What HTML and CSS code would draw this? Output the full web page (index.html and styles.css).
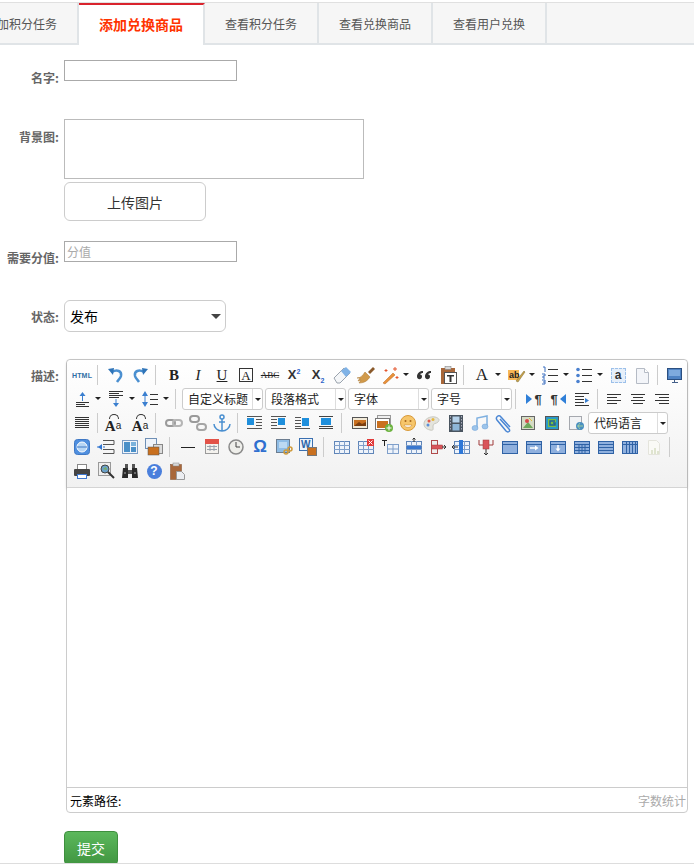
FILE: index.html
```html
<!DOCTYPE html>
<html lang="en">
<head>
    <meta charset="UTF-8">
    <meta name="viewport" content="width=device-width, initial-scale=1.0">
    <title>添加兑换商品</title>
    <link rel="stylesheet" href="styles.css">
</head>
<body>
    <svg class="defs" width="0" height="0">
        <symbol id="grid" viewBox="0 0 20 20">
            <rect x="2.500" y="4.500" width="15" height="12" fill="#eef3fa" stroke="#5f85b8"/>
            <path d="M2 8.500h16M2 12.500h16M7.500 4v13M12.500 4v13" stroke="#7f9fca" fill="none"/>
        </symbol>
        <symbol id="merge" viewBox="0 0 20 20">
            <rect x="2.500" y="4.500" width="15" height="12" fill="#8fb0de" stroke="#2f62a5"/>
            <path d="M2.500 7.500h15" stroke="#2f62a5"/>
        </symbol>
    </svg>

    <nav class="tabs">
        <a class="tab">添加积分任务</a>
        <a class="tab active">添加兑换商品</a>
        <a class="tab">查看积分任务</a>
        <a class="tab">查看兑换商品</a>
        <a class="tab">查看用户兑换</a>
    </nav>

    <form class="page">
        <div class="row row-name">
            <label class="lbl">名字:</label>
            <input class="txt" type="text">
        </div>
        <div class="row row-bg">
            <label class="lbl">背景图:</label>
            <div>
                <div class="preview"></div>
                <button type="button" class="upload">上传图片</button>
            </div>
        </div>
        <div class="row row-score">
            <label class="lbl">需要分值:</label>
            <input class="txt" type="text" placeholder="分值">
        </div>
        <div class="row row-state">
            <label class="lbl lbl-state">状态:</label>
            <div class="state">发布<i class="state-arrow"></i></div>
        </div>
        <div class="row row-desc">
            <label class="lbl lbl-desc">描述:</label>
            <div class="editor">
                <div class="toolbar">
                    <div class="tb-row">
                        <span class="tb"><span class="html-ic">HTML</span></span>
                        <span class="sep"></span>
                        <span class="tb"><svg width="20" height="20" viewBox="0 0 20 20"><path d="M6 7c5-3 10-1 9 4-.5 2-2 3-4 6" fill="none" stroke="#4a8fd0" stroke-width="2.500"/><path d="M2 4l6-1-1 7z" fill="#2f74b8"/></svg></span>
                        <span class="tb"><svg width="20" height="20" viewBox="0 0 20 20"><path d="M14 7C9 4 4 6 5 11c.5 2 2 3 4 6" fill="none" stroke="#4a8fd0" stroke-width="2.500"/><path d="M18 4l-6-1 1 7z" fill="#2f74b8"/></svg></span>
                        <span class="sep"></span>
                        <span class="tb glyph bold">B</span>
                        <span class="tb glyph ital">I</span>
                        <span class="tb glyph under">U</span>
                        <span class="tb"><span class="boxed">A</span></span>
                        <span class="tb"><span class="strike">ABC</span></span>
                        <span class="tb"><span class="xx">X<sup>2</sup></span></span>
                        <span class="tb"><span class="xx">X<sub>2</sub></span></span>
                        <span class="tb"><svg width="20" height="20" viewBox="0 0 20 20"><path d="M2 13L12 3l6 5L8 18H5z" fill="#f4f6f8" stroke="#9aa3ad"/><path d="M9 6l5-4 5 5-5 5z" fill="#7fb2e6"/></svg></span>
                        <span class="tb"><svg width="20" height="20" viewBox="0 0 20 20"><path d="M12 7l5-5 2 2-5 5z" fill="#8a5a2b"/><path d="M1 13c4 0 6-3 8-6l5 5c-2 3-5 6-11 6l2-3-3 1 2-3z" fill="#d19a4a" stroke="#a8742f" stroke-width=".5"/></svg></span>
                        <span class="tb"><svg width="20" height="20" viewBox="0 0 20 20"><path d="M3 18L13 8l2 2L5 19z" fill="#e8913a" stroke="#b8661e" stroke-width=".5"/><path d="M15 2v4M13 4h4M6 4v3M4.500 5.500h3M17 11v3M15.500 12.500h3" stroke="#e4572e" fill="none"/></svg></span><span class="caret"></span>
                        <span class="tb"><svg width="20" height="20" viewBox="0 0 20 20"><path d="M9 6C6 6 3 8 3 11.500S8 15 8 11.500C8 10 7 9.500 6 9.500 6.500 8.500 8 8 9 8zM17 6c-3 0-6 2-6 5.500S16 15 16 11.500c0-1.500-1-2-2-2 .5-1 2-1.500 3-1.500z" fill="#333"/></svg></span>
                        <span class="tb"><svg width="20" height="20" viewBox="0 0 20 20"><rect x="3" y="3" width="14" height="16" fill="#a8673a"/><rect x="7" y="1.500" width="6" height="3" fill="#d8d8d8" stroke="#777" stroke-width=".5"/><rect x="6.500" y="7.500" width="12" height="11" fill="#fff" stroke="#555"/><path d="M9 10h7v1.500h-2.500V17h-2v-5.500H9z" fill="#333"/></svg></span>
                        <span class="sep"></span>
                        <span class="tb glyph font-a">A</span><span class="caret"></span>
                        <span class="tb"><svg width="20" height="20" viewBox="0 0 20 20"><rect x="2" y="5" width="11" height="10" fill="#f6b756"/><text x="3" y="13" class="svg-ab">ab</text><path d="M10 16l8-10 1 1-7 10z" fill="#c9a24a" stroke="#7b6a2e" stroke-width=".5"/></svg></span><span class="caret"></span>
                        <span class="tb"><svg width="20" height="20" viewBox="0 0 20 20"><path d="M8 4.500h10M8 10.500h10M8 16.500h10" stroke="#333" fill="none"/><path d="M3 2h2v5M2 9h3v2H3v2h2M2 15h3v4H2M3 17h2" stroke="#3a6fc0" fill="none"/></svg></span><span class="caret"></span>
                        <span class="tb"><svg width="20" height="20" viewBox="0 0 20 20"><path d="M8 4.500h10M8 10.500h10M8 16.500h10" stroke="#333" fill="none"/><circle cx="4" cy="4.500" r="1.800" fill="#4a80d0"/><circle cx="4" cy="10.500" r="1.800" fill="#4a80d0"/><circle cx="4" cy="16.500" r="1.800" fill="#4a80d0"/></svg></span><span class="caret"></span>
                        <span class="tb"><span class="dashed-a">a</span></span>
                        <span class="tb"><svg width="20" height="20" viewBox="0 0 20 20"><path d="M4.500 3.500h8l4 4v11h-12z" fill="#f3f5f9" stroke="#b5bbc5"/><path d="M12.500 3.500v4h4" fill="#fff" stroke="#b5bbc5"/></svg></span>
                        <span class="sep sep-n"></span>
                        <span class="tb"><svg width="20" height="20" viewBox="0 0 20 20"><rect x="3.500" y="3.500" width="14" height="11" fill="#4f83c4" stroke="#2b4f80"/><rect x="5" y="5" width="11" height="6" fill="#7eaade"/><path d="M8 17.500h6M10.500 15v2" stroke="#44608a" fill="none"/></svg></span>
                    </div>
                    <div class="tb-row">
                        <span class="tb"><svg width="20" height="20" viewBox="0 0 20 20"><path d="M4 13.500h13M4 15.500h9M4 17.500h13" stroke="#333" fill="none"/><path d="M10.500 12V6" stroke="#3a7fd0"/><path d="M7.500 7l3-4 3 4z" fill="#3a7fd0"/></svg></span><span class="caret"></span>
                        <span class="tb"><svg width="20" height="20" viewBox="0 0 20 20"><path d="M3 2.500h14M3 4.500h10M3 6.500h14M3 8.500h10" stroke="#333" fill="none"/><path d="M10 10v5" stroke="#3a7fd0"/><path d="M7 14l3 4 3-4z" fill="#3a7fd0"/></svg></span><span class="caret"></span>
                        <span class="tb"><svg width="20" height="20" viewBox="0 0 20 20"><path d="M10 5.500h8M10 10.500h8M10 15.500h8" stroke="#333" fill="none"/><path d="M5 6v8" stroke="#3a7fd0"/><path d="M2 7l3-5 3 5zM2 13l3 5 3-5z" fill="#3a7fd0"/></svg></span><span class="caret"></span>
                        <span class="sep"></span>
                        <span class="combo">自定义标题</span>
                        <span class="combo">段落格式</span>
                        <span class="combo">字体</span>
                        <span class="combo combo-last">字号</span>
                        <span class="sep"></span>
                        <span class="tb"><span class="para"><i class="tri-r"></i>¶</span></span>
                        <span class="tb"><span class="para">¶<i class="tri-l"></i></span></span>
                        <span class="tb"><svg width="20" height="20" viewBox="0 0 20 20"><path d="M3 4.500h14M3 7.500h9M3 10.500h9M3 13.500h9M3 16.500h14" stroke="#333" fill="none"/><path d="M13 9l4 2.500-4 2.500z" fill="#3a7fd0"/></svg></span>
                        <span class="sep sep-n"></span>
                        <span class="tb"><svg width="20" height="20" viewBox="0 0 20 20"><path d="M3 5.500h14M3 8.500h10M3 11.500h14M3 14.500h10" stroke="#333"/></svg></span>
                        <span class="tb"><svg width="20" height="20" viewBox="0 0 20 20"><path d="M3 5.500h14M5 8.500h10M3 11.500h14M5 14.500h10" stroke="#333"/></svg></span>
                        <span class="tb"><svg width="20" height="20" viewBox="0 0 20 20"><path d="M3 5.500h14M7 8.500h10M3 11.500h14M7 14.500h10" stroke="#333"/></svg></span>
                    </div>
                    <div class="tb-row">
                        <span class="tb"><svg width="20" height="20" viewBox="0 0 20 20"><path d="M3 4.500h14M3 6.500h14M3 8.500h14M3 10.500h14M3 12.500h14M3 14.500h14" stroke="#333"/></svg></span>
                        <span class="sep"></span>
                        <span class="tb tb-left"><span class="case">A<small>a</small></span><i class="case-arc"></i></span>
                        <span class="tb"><span class="case">A<small>a</small></span><i class="case-arc"></i></span>
                        <span class="sep"></span>
                        <span class="tb"><svg width="20" height="20" viewBox="0 0 20 20"><rect x="2" y="7" width="9" height="6" rx="3" fill="none" stroke="#9a9a9a" stroke-width="2"/><rect x="9" y="7" width="9" height="6" rx="3" fill="none" stroke="#b5b5b5" stroke-width="2"/></svg></span>
                        <span class="tb"><svg width="20" height="20" viewBox="0 0 20 20"><rect x="2" y="3" width="9" height="6" rx="3" fill="none" stroke="#9a9a9a" stroke-width="2"/><rect x="9" y="11" width="9" height="6" rx="3" fill="none" stroke="#a5a5a5" stroke-width="2"/></svg></span>
                        <span class="tb"><svg width="20" height="20" viewBox="0 0 20 20"><circle cx="10" cy="4" r="2" fill="none" stroke="#4a8fd0" stroke-width="1.500"/><path d="M10 6v12M7 9h6M2 11c0 4 4 7 8 7s8-3 8-7" fill="none" stroke="#4a8fd0" stroke-width="1.500"/></svg></span>
                        <span class="sep sep-n"></span>
                        <span class="tb"><svg width="20" height="20" viewBox="0 0 20 20"><rect x="3" y="5" width="7" height="7" fill="#1f8fdc"/><path d="M3 3.500h15M12 6.500h6M12 9.500h6M12 12.500h6M3 15.500h15" stroke="#555"/></svg></span>
                        <span class="tb"><svg width="20" height="20" viewBox="0 0 20 20"><rect x="10" y="5" width="7" height="7" fill="#1f8fdc"/><path d="M3 3.500h15M3 6.500h6M3 9.500h6M3 12.500h6M3 15.500h15" stroke="#555"/></svg></span>
                        <span class="tb"><svg width="20" height="20" viewBox="0 0 20 20"><rect x="10" y="5" width="7" height="8" fill="#1f8fdc"/><path d="M3 4.500h6M3 7.500h6M3 10.500h6M3 13.500h6M3 15.500h15" stroke="#555"/></svg></span>
                        <span class="tb"><svg width="20" height="20" viewBox="0 0 20 20"><rect x="5" y="5" width="10" height="7" fill="#1f8fdc"/><path d="M3 3.500h14M3 13.500h14M3 15.500h14" stroke="#444"/></svg></span>
                        <span class="sep"></span>
                        <span class="tb"><svg width="20" height="20" viewBox="0 0 20 20"><rect x="2.500" y="4.500" width="15" height="11" fill="#f2ead8" stroke="#555"/><rect x="4" y="7" width="12" height="6" fill="#c9701f"/><path d="M4 13l5-4 3 2 4-2v4z" fill="#7a3e10"/></svg></span>
                        <span class="tb"><svg width="20" height="20" viewBox="0 0 20 20"><rect x="3.500" y="2.500" width="13" height="10" fill="#eee" stroke="#999"/><rect x="1.500" y="5.500" width="14" height="11" fill="#fff" stroke="#777"/><rect x="3" y="8" width="11" height="7" fill="#c9701f"/><circle cx="15" cy="15" r="4" fill="#6cb33f"/><path d="M15 12.500v5M12.500 15h5" stroke="#fff"/></svg></span>
                        <span class="tb"><svg width="20" height="20" viewBox="0 0 20 20"><circle cx="10" cy="10" r="7.500" fill="#f6c66b" stroke="#d99a3a"/><circle cx="7.500" cy="8" r="1" fill="#a5651c"/><circle cx="12.500" cy="8" r="1" fill="#a5651c"/><path d="M6 12h8c-1 3-7 3-8 0z" fill="#fff" stroke="#c07f28" stroke-width=".5"/></svg></span>
                        <span class="tb"><svg width="20" height="20" viewBox="0 0 20 20"><path d="M2 11c0-5 6-8 11-7 4 1 5 3 3 5s-5 1-5 4 1 5-3 4-6-3-6-6z" fill="#e4e4dc" stroke="#c8c8c0"/><circle cx="7" cy="8" r="1.500" fill="#e25b4b"/><circle cx="11" cy="6.500" r="1.500" fill="#e8b93e"/><circle cx="6" cy="12" r="1.500" fill="#5b8fd8"/></svg></span>
                        <span class="tb"><svg width="20" height="20" viewBox="0 0 20 20"><rect x="3" y="2" width="14" height="17" fill="#4a5560"/><rect x="6.500" y="3.500" width="7" height="6" fill="#b6d2ea"/><rect x="6.500" y="11" width="7" height="6.500" fill="#8eb6d8"/><path d="M4.500 3v15M15.500 3v15" stroke="#aab" stroke-dasharray="1.500 1.500"/></svg></span>
                        <span class="tb"><svg width="20" height="20" viewBox="0 0 20 20"><path d="M7 15V5l10-2v10" fill="none" stroke="#7fb0e0" stroke-width="1.500"/><ellipse cx="5" cy="15" rx="3" ry="2.500" fill="#9cc4ea" stroke="#6a9fd6" stroke-width=".5"/><ellipse cx="15" cy="13.500" rx="3" ry="2.500" fill="#9cc4ea" stroke="#6a9fd6" stroke-width=".5"/></svg></span>
                        <span class="tb"><svg width="20" height="20" viewBox="0 0 20 20"><path d="M6 6l9 10c2 2-1 4-3 2L3 7c-2-3 2-6 4-3l9 10" fill="none" stroke="#4a86d4" stroke-width="1.500"/></svg></span>
                        <span class="tb"><svg width="20" height="20" viewBox="0 0 20 20"><rect x="3.500" y="3.500" width="13" height="13" fill="#d6dcc4" stroke="#666"/><path d="M5 15l5-6 5 6z" fill="#6ea85b"/><circle cx="9" cy="8" r="2" fill="#d8484a"/><path d="M11 5l3 3" stroke="#e3b93c"/></svg></span>
                        <span class="tb"><svg width="20" height="20" viewBox="0 0 20 20"><rect x="3.500" y="3.500" width="13" height="13" fill="#2a9ac8" stroke="#555"/><rect x="6" y="6" width="8" height="8" fill="#7bc043"/><path d="M13 8H8v4h5v-2h-2" fill="none" stroke="#1f5f9e" stroke-width="1.500"/></svg></span>
                        <span class="tb"><svg width="20" height="20" viewBox="0 0 20 20"><rect x="3.500" y="3.500" width="12" height="13" fill="#f2f3f5" stroke="#a5a8ae"/><circle cx="14" cy="13" r="4" fill="#4a8fc0"/><path d="M11 13h6M14 10c-2 2-2 4 0 6" stroke="#9fd0a0" fill="none"/></svg></span>
                        <span class="combo combo-code">代码语言</span>
                    </div>
                    <div class="tb-row">
                        <span class="tb"><svg width="20" height="20" viewBox="0 0 20 20"><rect x="2.500" y="2.500" width="15" height="15" rx="3" fill="#4f8fdf" stroke="#3f78c4"/><circle cx="10" cy="10" r="5" fill="#b7d6f4" stroke="#fff"/><path d="M5 10h10" stroke="#3f78c4"/></svg></span>
                        <span class="tb"><svg width="20" height="20" viewBox="0 0 20 20"><path d="M7 3.500h11v4H7M7 12.500h11v4H7" fill="none" stroke="#555"/><path d="M1 10h9" stroke="#2f74d0" stroke-dasharray="2 1"/><path d="M6 7l-4 3 4 3z" fill="#2f74d0"/></svg></span>
                        <span class="tb"><svg width="20" height="20" viewBox="0 0 20 20"><rect x="2.500" y="3.500" width="15" height="13" fill="#f0f4fa" stroke="#7a9cc4"/><rect x="4" y="5" width="6" height="10" fill="#4a90c8"/><rect x="11" y="5" width="5" height="4" fill="#7ab2dc"/><rect x="11" y="10" width="5" height="5" fill="#4a90c8"/></svg></span>
                        <span class="tb"><svg width="20" height="20" viewBox="0 0 20 20"><rect x="1.500" y="1.500" width="11" height="10" fill="#eef3fa" stroke="#6f8fb5"/><rect x="9.500" y="7.500" width="9" height="9" fill="#ddd" stroke="#888"/><rect x="4" y="10" width="11" height="8" fill="#c9701f" stroke="#555" stroke-width=".5"/></svg></span>
                        <span class="sep"></span>
                        <span class="tb"><svg width="20" height="20" viewBox="0 0 20 20"><path d="M3 10.500h14" stroke="#222"/></svg></span>
                        <span class="tb"><svg width="20" height="20" viewBox="0 0 20 20"><rect x="3.500" y="3.500" width="13" height="13" fill="#f4f2ee" stroke="#9a9a9a"/><rect x="3" y="2" width="14" height="5" fill="#e25248"/><path d="M5 9.500h10M5 12.500h10M8 8v6M12 8v6" stroke="#9aa2ad"/></svg></span>
                        <span class="tb"><svg width="20" height="20" viewBox="0 0 20 20"><circle cx="10" cy="10" r="7" fill="#eeeeea" stroke="#8a8a8a" stroke-width="1.500"/><path d="M10 5v5h4" fill="none" stroke="#444"/></svg></span>
                        <span class="tb omega">Ω</span>
                        <span class="tb"><svg width="20" height="20" viewBox="0 0 20 20"><rect x="2.500" y="2.500" width="13" height="13" fill="#8fbde6" stroke="#6c7d90"/><rect x="5" y="5" width="8" height="6" fill="#bcd9f2"/><circle cx="12" cy="15" r="2" fill="none" stroke="#cf9a3a" stroke-width="1.500"/><circle cx="16" cy="12" r="2" fill="none" stroke="#cf9a3a" stroke-width="1.500"/></svg></span>
                        <span class="tb"><svg width="20" height="20" viewBox="0 0 20 20"><rect x="1.500" y="1.500" width="13" height="12" fill="#eef3fa" stroke="#3a6fb0"/><text x="3" y="11" class="svg-w">W</text><rect x="9.500" y="10.500" width="9" height="8" fill="#c9701f" stroke="#777"/></svg></span>
                        <span class="sep"></span>
                        <span class="tb"><svg width="20" height="20"><use href="#grid"/></svg></span>
                        <span class="tb"><svg width="20" height="20"><use href="#grid"/><rect x="11" y="2" width="7" height="7" fill="#e13a3a"/><path d="M12.500 3.500l4 4m0-4l-4 4" stroke="#fff"/></svg></span>
                        <span class="tb"><svg width="20" height="20" viewBox="0 0 20 20"><rect x="7.500" y="7.500" width="11" height="9" fill="#eef3fa" stroke="#7f9fca"/><path d="M7 12h12M13 7v10" stroke="#7f9fca"/><path d="M2 3.500h5M4.500 3v6" stroke="#222"/></svg></span>
                        <span class="tb"><svg width="20" height="20"><use href="#grid"/><rect x="3" y="9" width="14" height="3" fill="#3a78cf"/><path d="M10 5V1M8.500 2.500L10 1l1.500 1.500" stroke="#333" fill="none"/></svg></span>
                        <span class="tb"><svg width="20" height="20" viewBox="0 0 20 20"><rect x="3.500" y="3.500" width="6" height="13" fill="#eee" stroke="#b04a4a"/><rect x="3.500" y="8" width="11" height="4" fill="#d9545a" stroke="#a03a3a" stroke-width=".5"/><path d="M14 10h4M16 8l2 2-2 2" stroke="#333" fill="none"/></svg></span>
                        <span class="tb"><svg width="20" height="20"><use href="#grid"/><rect x="7" y="3" width="4" height="14" fill="#2e78d8"/><path d="M6 10H0M2 8l-2 2 2 2" stroke="#333" fill="none"/></svg></span>
                        <span class="tb"><svg width="20" height="20" viewBox="0 0 20 20"><path d="M3 3v5h14V3" fill="none" stroke="#a03a3a"/><rect x="7" y="3" width="6" height="9" fill="#d9545a" stroke="#a03a3a" stroke-width=".5"/><path d="M10 12v6M8 16l2 2 2-2" stroke="#333" fill="none"/></svg></span>
                        <span class="tb"><svg width="20" height="20"><use href="#merge"/></svg></span>
                        <span class="tb"><svg width="20" height="20"><use href="#merge"/><path d="M6 11h7" stroke="#fff" stroke-width="1.500"/><path d="M11 8.500l3.500 2.500-3.500 2.500z" fill="#fff"/></svg></span>
                        <span class="tb"><svg width="20" height="20"><use href="#merge"/><path d="M10 8v5" stroke="#fff" stroke-width="1.500"/><path d="M7.500 11.500l2.500 3 2.500-3z" fill="#fff"/></svg></span>
                        <span class="tb"><svg width="20" height="20"><use href="#merge"/><path d="M3 10.500h14M3 13.500h14M7 7v9M10 7v9M13 7v9" stroke="#2f62a5"/></svg></span>
                        <span class="tb"><svg width="20" height="20"><use href="#merge"/><path d="M3 10.500h14M3 13.500h14" stroke="#2f62a5"/></svg></span>
                        <span class="tb"><svg width="20" height="20"><use href="#merge"/><path d="M6.500 5v11M9.500 5v11M12.500 5v11M15.500 5v11" stroke="#2f62a5"/></svg></span>
                        <span class="tb"><svg width="20" height="20" viewBox="0 0 20 20"><path d="M4.500 3.500h8l3 3v11h-11z" fill="#fafaf6" stroke="#e4e4dc"/><path d="M8 17v-4M11 17v-6M14 17v-3" stroke="#dfe4cf" stroke-width="2"/></svg></span>
                        <span class="sep"></span>
                    </div>
                    <div class="tb-row">
                        <span class="tb"><svg width="20" height="20" viewBox="0 0 20 20"><rect x="5.500" y="3.500" width="9" height="5" fill="#fff" stroke="#888"/><rect x="2" y="8" width="16" height="7" rx="1" fill="#444"/><rect x="5.500" y="13.500" width="9" height="4" fill="#fff" stroke="#3f78d0"/></svg></span>
                        <span class="tb"><svg width="20" height="20" viewBox="0 0 20 20"><rect x="2.500" y="1.500" width="12" height="13" fill="#eee" stroke="#999"/><circle cx="9" cy="8" r="4" fill="#6aa0c8" stroke="#444"/><path d="M7 8l3-2 1 3z" fill="#7bb05b"/><path d="M12 11l6 6" stroke="#333" stroke-width="2"/></svg></span>
                        <span class="tb"><svg width="20" height="20" viewBox="0 0 20 20"><path d="M3 7h5v10H2z M12 7h5l1 10h-6z" fill="#2a2a2a"/><path d="M5 3h3v4H5zM12 3h3v4h-3zM8 9h4v4H8z" fill="#555"/><path d="M4 12h2M14 12h2" stroke="#aaa"/></svg></span>
                        <span class="tb"><span class="help">?</span></span>
                        <span class="tb"><svg width="20" height="20" viewBox="0 0 20 20"><rect x="2.500" y="3.500" width="11" height="15" fill="#a8673a" stroke="#7d4a28" stroke-width=".5"/><rect x="5" y="2" width="6" height="3" fill="#d8d8d8" stroke="#888" stroke-width=".5"/><path d="M8.500 10.500h5l3 3v5h-8z" fill="#eceef2" stroke="#999"/></svg></span>
                    </div>
                </div>
                <div class="edit-area"></div>
                <div class="status">
                    <span>元素路径:</span>
                    <span class="count">字数统计</span>
                </div>
            </div>
        </div>
        <button type="button" class="submit">提交</button>
    </form>
</body>
</html>
```

FILE: styles.css
```css
html, body { margin: 0; padding: 0; height: 864px; overflow: hidden; background: #fff; }
body { font-family: "Noto Sans CJK SC", "Liberation Sans", sans-serif; font-size: 12px; color: #333; }
.defs { position: absolute; }

/* tabs */
.tabs { display: flex; height: 40px; margin-top: 2px; background: #f6f6f6; border-top: 1px solid #e0e0e0; border-bottom: 2px solid #e0e4e7; }
.tab { flex: none; box-sizing: border-box; width: 114px; height: 40px; line-height: 42px; text-align: center; font-size: 12px; color: #555; border-right: 2px solid #e0e4e7; }
.tab:first-child { margin-left: -35px; }
.tab.active { width: 126px; height: 42px; line-height: 38px; font-size: 14px; font-weight: bold; color: #f30; background: #fff; border-top: 2px solid #d9232d; }

/* form */
.page { height: 818px; overflow: hidden; border-bottom: 1px solid #ddd; }
.row { display: flex; }
.lbl { flex: none; width: 59px; margin-right: 5px; padding-top: 9px; text-align: right; font-size: 12px; font-weight: bold; color: #666; white-space: nowrap; }
.row-name { margin-top: 15px; height: 59px; }
.row-bg { height: 122px; }
.row-score { height: 59px; }
.row-score .lbl { padding-top: 8px; }
.row-state { height: 59px; }
.lbl-state, .lbl-desc { padding-top: 8px; }

.txt { box-sizing: border-box; width: 173px; height: 21px; margin: 0; padding: 0 2px; border: 1px solid #aaa; font: 12px "Noto Sans CJK SC", sans-serif; outline: none; }
.txt::placeholder { color: #aaa; }
.preview { box-sizing: border-box; width: 300px; height: 60px; border: 1px solid #bbb; margin-bottom: 3px; }
.upload { display: block; box-sizing: border-box; width: 142px; height: 39px; background: #fff; border: 1px solid #ccc; border-radius: 6px; font: 14px "Noto Sans CJK SC", sans-serif; color: #333; }
.state { box-sizing: border-box; position: relative; width: 162px; height: 32px; line-height: 30px; padding-left: 5px; border: 1px solid #ccc; border-radius: 6px; font-size: 14px; color: #000; }
.state-arrow { position: absolute; right: 4px; top: 13px; border: 5px solid transparent; border-top: 5px solid #444; border-bottom: 0; }

/* editor */
.editor { box-sizing: border-box; width: 622px; height: 454px; margin-left: 2px; border: 1px solid #ccc; border-radius: 4px; display: flex; flex-direction: column; }
.toolbar { flex: none; box-sizing: border-box; height: 128px; padding: 3px 0 4px 3px; background: linear-gradient(#fff, #f1f1f1); border-bottom: 1px solid #d4d4d4; box-shadow: 0 1px 3px rgba(0, 0, 0, 0.25); border-radius: 4px 4px 0 0; }
.tb-row { display: flex; align-items: center; height: 24px; }
.tb { flex: none; position: relative; width: 24px; height: 24px; display: flex; align-items: center; justify-content: center; color: #222; }
.tb-left { left: -3px; }
.caret { flex: none; width: 10px; height: 24px; position: relative; }
.caret::after { content: ""; position: absolute; left: 1px; top: 10px; border: 3px solid transparent; border-top: 3px solid #222; border-bottom: 0; }
.sep { flex: none; width: 10px; height: 20px; position: relative; }
.sep::after { content: ""; position: absolute; left: 3px; top: 0; width: 1px; height: 20px; background: #ccc; }
.sep-n { width: 8px; }

.html-ic { font: bold 7px "Liberation Sans", sans-serif; color: #2f6ea5; letter-spacing: 0.2px; }
.glyph { font-family: "Liberation Serif", serif; font-size: 15px; }
.bold { font-weight: bold; }
.ital { font-style: italic; }
.under { text-decoration: underline; }
.font-a { font-size: 17px; }
.boxed { box-sizing: border-box; width: 14px; height: 14px; border: 1px solid #333; text-align: center; font: 13px/13px "Liberation Serif", serif; }
.strike { font: 9px "Liberation Serif", serif; text-decoration: line-through; }
.xx { font: bold 13px/14px "Liberation Sans", sans-serif; color: #333; position: relative; }
.xx sup, .xx sub { font-size: 7px; line-height: 0; color: #2a62c8; }
.dashed-a { box-sizing: border-box; width: 15px; height: 15px; border: 1px dashed #9cc0ea; background: #e6effa; font: bold 12px/13px "Liberation Sans", sans-serif; text-align: center; color: #333; }
.para { display: flex; align-items: center; font: bold 13px "Liberation Sans", sans-serif; color: #333; }
.tri-r { border: 5px solid transparent; border-left: 6px solid #2f7fd8; border-right: 0; margin-right: 2px; }
.tri-l { border: 5px solid transparent; border-right: 6px solid #2f7fd8; border-left: 0; margin-left: 2px; }
.case { font: bold 15px/14px "Liberation Serif", serif; margin-top: 6px; }
.case small { font: 10px "Liberation Sans", sans-serif; vertical-align: 2px; }
.case-arc { position: absolute; top: 3px; left: 8px; width: 8px; height: 4px; border: 1px solid #333; border-bottom: 0; border-radius: 5px 5px 0 0; }
.omega { font: bold 17px "Liberation Sans", sans-serif; color: #2f6fd0; }
.help { width: 15px; height: 15px; border-radius: 50%; background: #4a7fdc; color: #fff; font: bold 12px/15px "Liberation Sans", sans-serif; text-align: center; }
.svg-ab { font: bold 9px "Liberation Sans", sans-serif; fill: #222; }
.svg-w { font: bold 10px "Liberation Sans", sans-serif; fill: #2a62a8; }

.combo { flex: none; box-sizing: border-box; position: relative; width: 81px; height: 22px; line-height: 20px; margin-right: 2px; padding-left: 5px; background: #fff; border: 1px solid #ccc; border-radius: 3px; font-size: 12px; color: #222; }
.combo::before { content: ""; position: absolute; right: 9px; top: 0; width: 1px; height: 20px; background: #ddd; }
.combo::after { content: ""; position: absolute; right: 1px; top: 9px; border: 3px solid transparent; border-top: 3px solid #222; border-bottom: 0; }
.combo-last { margin-right: 0; }
.combo-code { width: 80px; margin-right: 0; }

.edit-area { flex: 1; background: #fff; }
.status { flex: none; box-sizing: border-box; display: flex; justify-content: space-between; height: 25px; line-height: 25px; padding: 0 1px 0 3px; border-top: 1px solid #ccc; font-size: 12px; color: #000; }
.count { color: #aaa; }

.submit { display: block; box-sizing: border-box; width: 54px; height: 34px; margin: 18px 0 0 64px; background: linear-gradient(#5cb85c, #419641); border: 1px solid #3e8f3e; border-radius: 4px; color: #fff; font: 14px "Noto Sans CJK SC", sans-serif; }
```
